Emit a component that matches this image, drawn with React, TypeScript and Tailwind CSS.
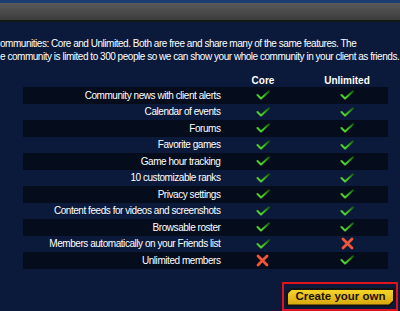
import React from "react";

type Row = { label: string; core: boolean; unlimited: boolean };

const rows: Row[] = [
  { label: "Community news with client alerts", core: true, unlimited: true },
  { label: "Calendar of events", core: true, unlimited: true },
  { label: "Forums", core: true, unlimited: true },
  { label: "Favorite games", core: true, unlimited: true },
  { label: "Game hour tracking", core: true, unlimited: true },
  { label: "10 customizable ranks", core: true, unlimited: true },
  { label: "Privacy settings", core: true, unlimited: true },
  { label: "Content feeds for videos and screenshots", core: true, unlimited: true },
  { label: "Browsable roster", core: true, unlimited: true },
  { label: "Members automatically on your Friends list", core: true, unlimited: false },
  { label: "Unlimited members", core: false, unlimited: true },
];

function Check() {
  return (
    <svg width="14" height="10" viewBox="0 0 14 10">
      <defs>
        <linearGradient id="chk" x1="0" y1="1" x2="1" y2="0">
          <stop offset="0" stopColor="#5fe03a" />
          <stop offset="0.5" stopColor="#3cb81c" />
          <stop offset="1" stopColor="#145c0c" />
        </linearGradient>
      </defs>
      <path d="M1.5 5 L5 8.5 L13 1.2" fill="none" stroke="url(#chk)" strokeWidth="2" strokeLinecap="round" strokeLinejoin="round" />
    </svg>
  );
}

function Cross() {
  return (
    <svg width="13" height="13" viewBox="0 0 13 13">
      <path d="M2 2 L11 11 M11 2 L2 11" fill="none" stroke="#f2553a" strokeWidth="2.8" strokeLinecap="round" />
    </svg>
  );
}

export default function App() {
  return (
    <div
      className="w-[400px] h-[311px] overflow-hidden bg-[#0b1a3a] text-white flex flex-col"
      style={{ fontFamily: "'Liberation Sans', Arial, sans-serif" }}
    >
      <div className="h-[3px] bg-[#1d3c72]" />
      <div className="h-[17px] bg-gradient-to-b from-[#5a5a5a] to-[#3c3c3c]" />
      <div className="h-[2px] bg-[#0f1a14]" />

      <div className="mt-[15px] text-[10px] leading-[13px] tracking-[-0.47px] whitespace-nowrap">
        <div>ommunities: Core and Unlimited. Both are free and share many of the same features. The</div>
        <div>e community is limited to 300 people so we can show your whole community in your client as friends.</div>
      </div>

      <div className="mt-[11px] flex text-[10px] font-bold h-[12px] items-center">
        <div className="w-[240px]" />
        <div className="w-[46px] text-center">Core</div>
        <div className="w-[37px]" />
        <div className="w-[48px] text-center">Unlimited</div>
      </div>

      <div className="mt-[1px] ml-[23px] w-[365px] text-[10px] tracking-[-0.45px]">
        {rows.map((r, i) => (
          <div
            key={r.label}
            className={`flex items-center h-[16.5px] ${i % 2 === 0 ? "bg-[#050c1b]" : ""}`}
          >
            <div className="w-[198px] text-right whitespace-nowrap">{r.label}</div>
            <div className="w-[84px] flex justify-center pl-[1px]">
              {r.core ? <Check /> : <Cross />}
            </div>
            <div className="w-[84px] flex justify-center pl-[2px]">
              {r.unlimited ? <Check /> : <Cross />}
            </div>
          </div>
        ))}
      </div>

      <div className="flex justify-end mt-[13px] pr-[2px]">
        <div className="border-2 border-[#e0141e] w-[116px] h-[29px] pt-[4px] pl-[2px]">
          <div
            className="w-[109px] h-[19px] bg-[#111] p-[2px]"
            style={{ clipPath: "polygon(6px 0, 100% 0, 100% calc(100% - 6px), calc(100% - 6px) 100%, 0 100%, 0 6px)" }}
          >
            <div
              className="h-full bg-gradient-to-b from-[#f5d52a] to-[#d9a60a] text-[#1a1400] text-[11.5px] font-bold flex items-center justify-center"
              style={{ clipPath: "polygon(4px 0, 100% 0, 100% calc(100% - 4px), calc(100% - 4px) 100%, 0 100%, 0 4px)" }}
            >
              Create your own
            </div>
          </div>
        </div>
      </div>
    </div>
  );
}
